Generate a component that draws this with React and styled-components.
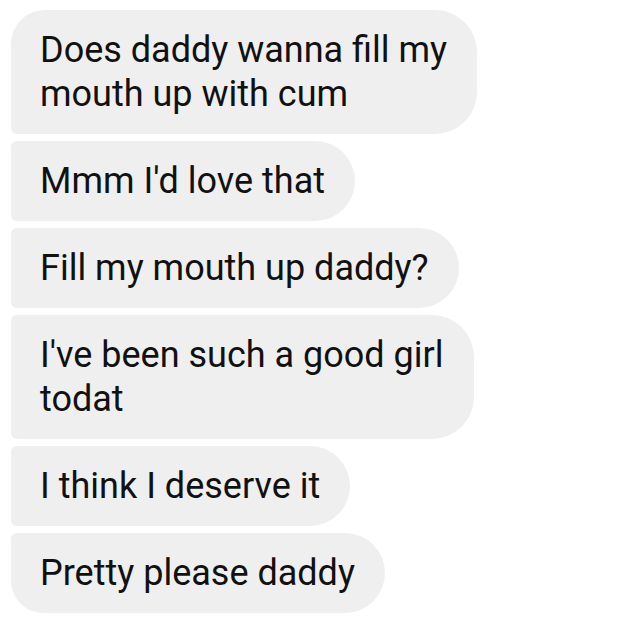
import React from "react";
import styled, { createGlobalStyle } from "styled-components";

const Global = createGlobalStyle`
  html, body { margin: 0; background: #ffffff; }
  body { font-family: Roboto, "Noto Sans", sans-serif; }
`;

// each message is split into its wrapped lines, so the bubble hugs the longest one
const messages = [
  ["Does daddy wanna fill my", "mouth up with cum"],
  ["Mmm I'd love that"],
  ["Fill my mouth up daddy?"],
  ["I've been such a good girl", "todat"],
  ["I think I deserve it"],
  ["Pretty please daddy"],
];

const Thread = styled.div`
  display: flex;
  flex-direction: column;
  align-items: flex-start;
  gap: 7px;
  padding: 10px 11px;
`;

const Bubble = styled.div`
  background: #efefef;
  color: #111;
  font-size: 36px;
  line-height: 44px;
  padding: 18px 30px 18px 29px;
  white-space: nowrap;
  border-radius: ${({ $first }) => ($first ? "34px" : "6px")} 42px 42px
    ${({ $last }) => ($last ? "34px" : "6px")};
`;

const Line = styled.span`
  display: block;
`;

export default function App() {
  return (
    <>
      <Global />
      <Thread>
        {messages.map((lines, i) => (
          <Bubble key={i} $first={i === 0} $last={i === messages.length - 1}>
            {lines.map((l, j) => (
              <Line key={j}>{l}</Line>
            ))}
          </Bubble>
        ))}
      </Thread>
    </>
  );
}
